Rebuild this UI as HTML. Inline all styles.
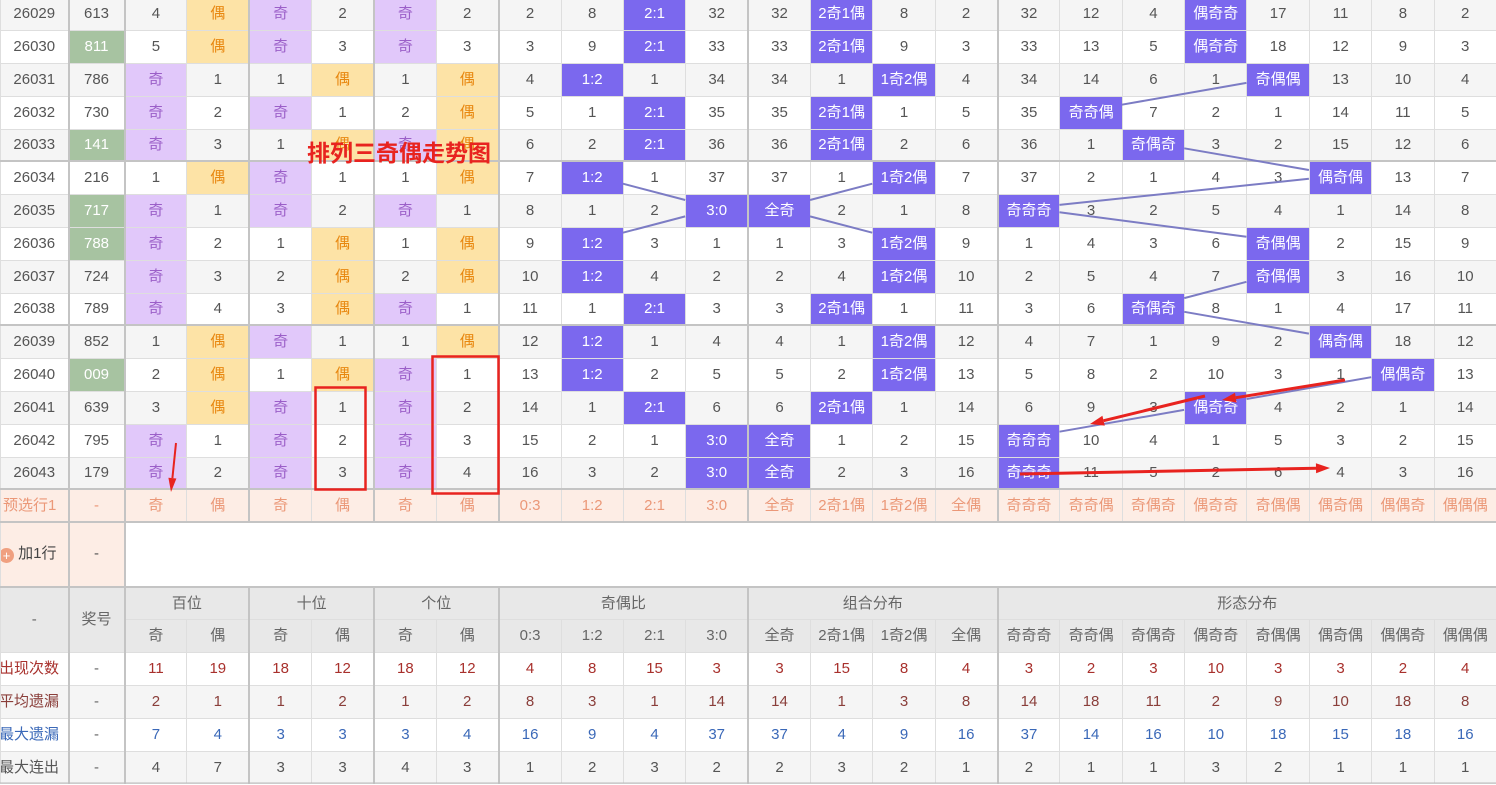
<!DOCTYPE html>
<html><head><meta charset="utf-8">
<style>
html,body{margin:0;padding:0;background:#fff;width:1496px;height:785px;overflow:hidden;position:relative}
table{position:absolute;left:0;top:-2.6px;border-collapse:collapse;table-layout:fixed;width:1496px;font-family:"Liberation Sans","Noto Sans CJK SC",sans-serif;font-size:15px;color:#555}
td{height:31.8px;padding:0;text-align:center;border:1px solid #dedede;white-space:nowrap;overflow:hidden;line-height:18px}
tr.sep td{height:30.8px}
tr.s td{background:#f5f5f5}
td.p,tr.s td.p{background:#e1c8fa;color:#9b5fc8}
td.o,tr.s td.o{background:#fde3a6;color:#e8870f}
td.b,tr.s td.b{background:#7b68ee;color:#fff}
td.g,tr.s td.g{background:#a7c3a1;color:#fff}
tr.sep td{border-bottom:2px solid #c4c4c4}
tr.pre td{background:#fdede5;color:#eb9878;border-bottom:2px solid #c4c4c4;height:30.8px}
tr.h td{background:#e8e8e8;color:#666}
td.l{text-align:left;text-indent:-3px}
tr.r1 td{color:#a8302c}
tr.r2 td{color:#8a3e3a}
tr.r3 td{color:#3a68b8}
tr.r4 td{color:#555}
tr.r1 td.n,tr.r2 td.n,tr.r3 td.n,tr.r4 td.n{color:#666}
col.G{border-left:2px solid #c4c4c4}
svg{position:absolute;left:0;top:0}
.title{position:absolute;left:307px;top:134px;font-family:"Liberation Sans","Noto Sans CJK SC",sans-serif;font-size:23px;font-weight:bold;color:#e8231f}
</style></head><body>
<table>
<colgroup><col style="width:68px"><col class="G" style="width:56px"><col class="G" style="width:62.36px"><col style="width:62.36px"><col class="G" style="width:62.36px"><col style="width:62.36px"><col class="G" style="width:62.36px"><col style="width:62.36px"><col class="G" style="width:62.36px"><col style="width:62.36px"><col style="width:62.36px"><col style="width:62.36px"><col class="G" style="width:62.36px"><col style="width:62.36px"><col style="width:62.36px"><col style="width:62.36px"><col class="G" style="width:62.36px"><col style="width:62.36px"><col style="width:62.36px"><col style="width:62.36px"><col style="width:62.36px"><col style="width:62.36px"><col style="width:62.36px"><col style="width:62.36px"></colgroup>
<tr class="s"><td>26029</td><td>613</td><td>4</td><td class="o">偶</td><td class="p">奇</td><td>2</td><td class="p">奇</td><td>2</td><td>2</td><td>8</td><td class="b">2:1</td><td>32</td><td>32</td><td class="b">2奇1偶</td><td>8</td><td>2</td><td>32</td><td>12</td><td>4</td><td class="b">偶奇奇</td><td>17</td><td>11</td><td>8</td><td>2</td></tr>
<tr><td>26030</td><td class="g">811</td><td>5</td><td class="o">偶</td><td class="p">奇</td><td>3</td><td class="p">奇</td><td>3</td><td>3</td><td>9</td><td class="b">2:1</td><td>33</td><td>33</td><td class="b">2奇1偶</td><td>9</td><td>3</td><td>33</td><td>13</td><td>5</td><td class="b">偶奇奇</td><td>18</td><td>12</td><td>9</td><td>3</td></tr>
<tr class="s"><td>26031</td><td>786</td><td class="p">奇</td><td>1</td><td>1</td><td class="o">偶</td><td>1</td><td class="o">偶</td><td>4</td><td class="b">1:2</td><td>1</td><td>34</td><td>34</td><td>1</td><td class="b">1奇2偶</td><td>4</td><td>34</td><td>14</td><td>6</td><td>1</td><td class="b">奇偶偶</td><td>13</td><td>10</td><td>4</td></tr>
<tr><td>26032</td><td>730</td><td class="p">奇</td><td>2</td><td class="p">奇</td><td>1</td><td>2</td><td class="o">偶</td><td>5</td><td>1</td><td class="b">2:1</td><td>35</td><td>35</td><td class="b">2奇1偶</td><td>1</td><td>5</td><td>35</td><td class="b">奇奇偶</td><td>7</td><td>2</td><td>1</td><td>14</td><td>11</td><td>5</td></tr>
<tr class="s sep"><td>26033</td><td class="g">141</td><td class="p">奇</td><td>3</td><td>1</td><td class="o">偶</td><td class="p">奇</td><td class="o">偶</td><td>6</td><td>2</td><td class="b">2:1</td><td>36</td><td>36</td><td class="b">2奇1偶</td><td>2</td><td>6</td><td>36</td><td>1</td><td class="b">奇偶奇</td><td>3</td><td>2</td><td>15</td><td>12</td><td>6</td></tr>
<tr><td>26034</td><td>216</td><td>1</td><td class="o">偶</td><td class="p">奇</td><td>1</td><td>1</td><td class="o">偶</td><td>7</td><td class="b">1:2</td><td>1</td><td>37</td><td>37</td><td>1</td><td class="b">1奇2偶</td><td>7</td><td>37</td><td>2</td><td>1</td><td>4</td><td>3</td><td class="b">偶奇偶</td><td>13</td><td>7</td></tr>
<tr class="s"><td>26035</td><td class="g">717</td><td class="p">奇</td><td>1</td><td class="p">奇</td><td>2</td><td class="p">奇</td><td>1</td><td>8</td><td>1</td><td>2</td><td class="b">3:0</td><td class="b">全奇</td><td>2</td><td>1</td><td>8</td><td class="b">奇奇奇</td><td>3</td><td>2</td><td>5</td><td>4</td><td>1</td><td>14</td><td>8</td></tr>
<tr><td>26036</td><td class="g">788</td><td class="p">奇</td><td>2</td><td>1</td><td class="o">偶</td><td>1</td><td class="o">偶</td><td>9</td><td class="b">1:2</td><td>3</td><td>1</td><td>1</td><td>3</td><td class="b">1奇2偶</td><td>9</td><td>1</td><td>4</td><td>3</td><td>6</td><td class="b">奇偶偶</td><td>2</td><td>15</td><td>9</td></tr>
<tr class="s"><td>26037</td><td>724</td><td class="p">奇</td><td>3</td><td>2</td><td class="o">偶</td><td>2</td><td class="o">偶</td><td>10</td><td class="b">1:2</td><td>4</td><td>2</td><td>2</td><td>4</td><td class="b">1奇2偶</td><td>10</td><td>2</td><td>5</td><td>4</td><td>7</td><td class="b">奇偶偶</td><td>3</td><td>16</td><td>10</td></tr>
<tr class="sep"><td>26038</td><td>789</td><td class="p">奇</td><td>4</td><td>3</td><td class="o">偶</td><td class="p">奇</td><td>1</td><td>11</td><td>1</td><td class="b">2:1</td><td>3</td><td>3</td><td class="b">2奇1偶</td><td>1</td><td>11</td><td>3</td><td>6</td><td class="b">奇偶奇</td><td>8</td><td>1</td><td>4</td><td>17</td><td>11</td></tr>
<tr class="s"><td>26039</td><td>852</td><td>1</td><td class="o">偶</td><td class="p">奇</td><td>1</td><td>1</td><td class="o">偶</td><td>12</td><td class="b">1:2</td><td>1</td><td>4</td><td>4</td><td>1</td><td class="b">1奇2偶</td><td>12</td><td>4</td><td>7</td><td>1</td><td>9</td><td>2</td><td class="b">偶奇偶</td><td>18</td><td>12</td></tr>
<tr><td>26040</td><td class="g">009</td><td>2</td><td class="o">偶</td><td>1</td><td class="o">偶</td><td class="p">奇</td><td>1</td><td>13</td><td class="b">1:2</td><td>2</td><td>5</td><td>5</td><td>2</td><td class="b">1奇2偶</td><td>13</td><td>5</td><td>8</td><td>2</td><td>10</td><td>3</td><td>1</td><td class="b">偶偶奇</td><td>13</td></tr>
<tr class="s"><td>26041</td><td>639</td><td>3</td><td class="o">偶</td><td class="p">奇</td><td>1</td><td class="p">奇</td><td>2</td><td>14</td><td>1</td><td class="b">2:1</td><td>6</td><td>6</td><td class="b">2奇1偶</td><td>1</td><td>14</td><td>6</td><td>9</td><td>3</td><td class="b">偶奇奇</td><td>4</td><td>2</td><td>1</td><td>14</td></tr>
<tr><td>26042</td><td>795</td><td class="p">奇</td><td>1</td><td class="p">奇</td><td>2</td><td class="p">奇</td><td>3</td><td>15</td><td>2</td><td>1</td><td class="b">3:0</td><td class="b">全奇</td><td>1</td><td>2</td><td>15</td><td class="b">奇奇奇</td><td>10</td><td>4</td><td>1</td><td>5</td><td>3</td><td>2</td><td>15</td></tr>
<tr class="s sep"><td>26043</td><td>179</td><td class="p">奇</td><td>2</td><td class="p">奇</td><td>3</td><td class="p">奇</td><td>4</td><td>16</td><td>3</td><td>2</td><td class="b">3:0</td><td class="b">全奇</td><td>2</td><td>3</td><td>16</td><td class="b">奇奇奇</td><td>11</td><td>5</td><td>2</td><td>6</td><td>4</td><td>3</td><td>16</td></tr>
<tr class="pre"><td class="l" style="text-indent:2px">预选行1</td><td>-</td><td>奇</td><td>偶</td><td>奇</td><td>偶</td><td>奇</td><td>偶</td><td>0:3</td><td>1:2</td><td>2:1</td><td>3:0</td><td>全奇</td><td>2奇1偶</td><td>1奇2偶</td><td>全偶</td><td>奇奇奇</td><td>奇奇偶</td><td>奇偶奇</td><td>偶奇奇</td><td>奇偶偶</td><td>偶奇偶</td><td>偶偶奇</td><td>偶偶偶</td></tr>
<tr><td style="height:62.5px;background:#fdede5;text-align:left;color:#444;border-bottom:2px solid #c4c4c4"><span style="display:inline-block;width:15px;height:15px;border-radius:50%;background:#f0a080;color:#fff;font-size:13px;line-height:15px;text-align:center;margin-left:-2px;vertical-align:-2px">+</span> 加1行</td><td style="background:#fdede5;border-bottom:2px solid #c4c4c4">-</td><td colspan="22" style="background:#fff;border-bottom:2px solid #c4c4c4"></td></tr>
<tr class="h"><td rowspan="2">-</td><td rowspan="2">奖号</td><td colspan="2">百位</td><td colspan="2">十位</td><td colspan="2">个位</td><td colspan="4">奇偶比</td><td colspan="4">组合分布</td><td colspan="8">形态分布</td></tr>
<tr class="h"><td>奇</td><td>偶</td><td>奇</td><td>偶</td><td>奇</td><td>偶</td><td>0:3</td><td>1:2</td><td>2:1</td><td>3:0</td><td>全奇</td><td>2奇1偶</td><td>1奇2偶</td><td>全偶</td><td>奇奇奇</td><td>奇奇偶</td><td>奇偶奇</td><td>偶奇奇</td><td>奇偶偶</td><td>偶奇偶</td><td>偶偶奇</td><td>偶偶偶</td></tr>
<tr class="r1"><td class="l">出现次数</td><td class="n">-</td><td>11</td><td>19</td><td>18</td><td>12</td><td>18</td><td>12</td><td>4</td><td>8</td><td>15</td><td>3</td><td>3</td><td>15</td><td>8</td><td>4</td><td>3</td><td>2</td><td>3</td><td>10</td><td>3</td><td>3</td><td>2</td><td>4</td></tr>
<tr class="r2 s"><td class="l">平均遗漏</td><td class="n">-</td><td>2</td><td>1</td><td>1</td><td>2</td><td>1</td><td>2</td><td>8</td><td>3</td><td>1</td><td>14</td><td>14</td><td>1</td><td>3</td><td>8</td><td>14</td><td>18</td><td>11</td><td>2</td><td>9</td><td>10</td><td>18</td><td>8</td></tr>
<tr class="r3"><td class="l">最大遗漏</td><td class="n">-</td><td>7</td><td>4</td><td>3</td><td>3</td><td>3</td><td>4</td><td>16</td><td>9</td><td>4</td><td>37</td><td>37</td><td>4</td><td>9</td><td>16</td><td>37</td><td>14</td><td>16</td><td>10</td><td>18</td><td>15</td><td>18</td><td>16</td></tr>
<tr class="r4 s"><td class="l">最大连出</td><td class="n">-</td><td>4</td><td>7</td><td>3</td><td>3</td><td>4</td><td>3</td><td>1</td><td>2</td><td>3</td><td>2</td><td>2</td><td>3</td><td>2</td><td>1</td><td>2</td><td>1</td><td>1</td><td>3</td><td>2</td><td>1</td><td>1</td><td>1</td></tr>
</table>
<div class="title">排列三奇偶走势图</div>
<svg width="1496" height="785" viewBox="0 0 1496 785">
<g stroke="#7c7cc4" stroke-width="2" fill="none">
<line x1="622.9" y1="183.7" x2="685.2" y2="200"/>
<line x1="685.2" y1="216.4" x2="622.9" y2="232.7"/>
<line x1="872.3" y1="183.7" x2="810" y2="200"/>
<line x1="810" y1="216.4" x2="872.3" y2="232.7"/>
<line x1="1246.5" y1="82.9" x2="1121.8" y2="104.7"/>
<line x1="1184.2" y1="148.3" x2="1308.9" y2="170"/>
<line x1="1308.9" y1="178.8" x2="1059.4" y2="204.9"/>
<line x1="1059.4" y1="212.3" x2="1246.5" y2="236.8"/>
<line x1="1246.5" y1="281.8" x2="1184.2" y2="298.1"/>
<line x1="1184.2" y1="311.8" x2="1308.9" y2="333.6"/>
<line x1="1371.2" y1="377.2" x2="1246.5" y2="399"/>
<line x1="1184.1" y1="409.9" x2="1059.4" y2="431.7"/>
</g>
<g stroke="#e8231f" fill="none">
<rect x="315.5" y="387.5" width="50" height="102" stroke-width="2.5"/>
<rect x="432.5" y="356.5" width="66" height="137" stroke-width="2.5"/>
<line x1="1345" y1="380" x2="1235.8" y2="397.7" stroke-width="3"/>
<line x1="1205" y1="396" x2="1103.6" y2="420.7" stroke-width="3"/>
<line x1="1020" y1="474" x2="1316" y2="468.3" stroke-width="3"/>
<line x1="176" y1="443" x2="172.4" y2="478.1" stroke-width="2"/>
</g>
<g fill="#e8231f">
<polygon points="1222,400 1235,392.8 1236.6,402.6"/>
<polygon points="1090,424 1102.4,415.8 1104.8,425.6"/>
<polygon points="1330,468 1316.1,473.3 1315.9,463.3"/>
<polygon points="171,492 176.4,478.5 168.4,477.7"/>
</g>
<line x1="0" y1="783" x2="1496" y2="783" stroke="#bbb" stroke-width="1"/>
</svg>
</body></html>
